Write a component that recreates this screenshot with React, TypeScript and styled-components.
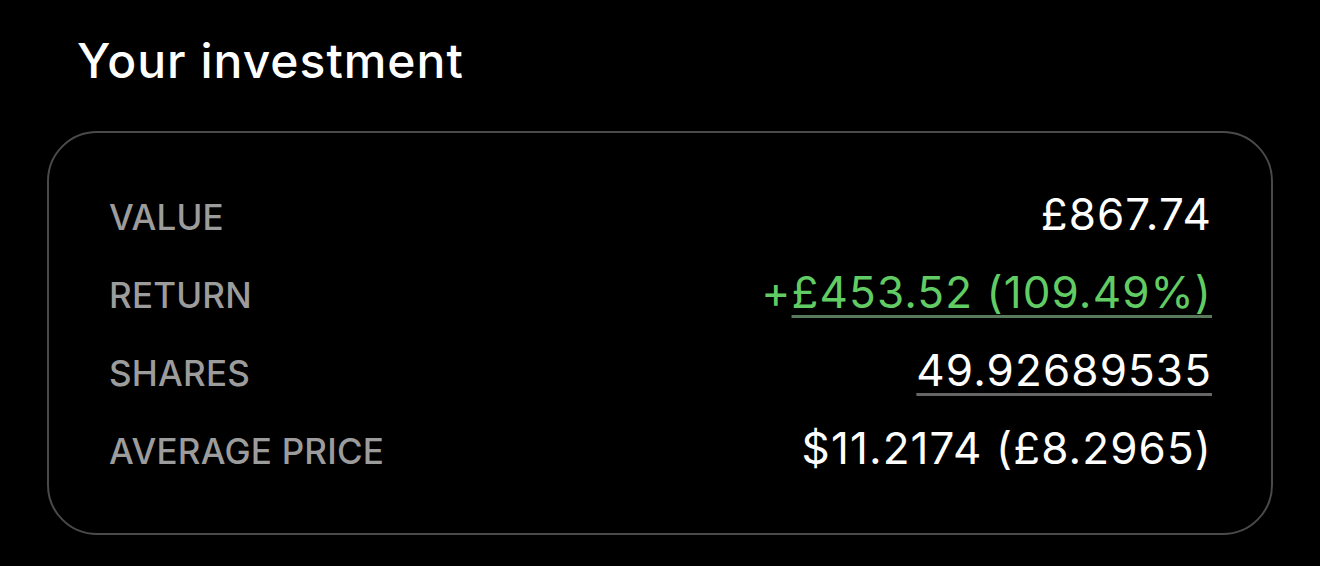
import styled, { createGlobalStyle } from "styled-components";

const GlobalStyle = createGlobalStyle`
  html, body {
    margin: 0;
    padding: 0;
    background: #000;
  }
  body {
    font-family: "Inter", "Liberation Sans", sans-serif;
    color: #fff;
  }
`;

const Page = styled.main`
  width: 1320px;
  height: 566px;
  box-sizing: border-box;
  padding: 22px 47px 0 47px;
  background: #000;
`;

const Title = styled.h2`
  margin: 0 0 0 30px;
  font-size: 48px;
  font-weight: 500;
  line-height: 78px;
  letter-spacing: 1px;
  color: #fff;
`;

const Card = styled.section`
  margin-top: 31px;
  box-sizing: border-box;
  height: 404px;
  border: 2px solid #4a4a4a;
  border-radius: 50px;
  padding: 42px 60px 0 60px;
`;

const Row = styled.div`
  display: flex;
  align-items: baseline;
  justify-content: space-between;
  height: 78px;
  line-height: 78px;
`;

const Label = styled.span`
  font-size: 35px;
  font-weight: 500;
  letter-spacing: 0.2px;
  color: #9c9c9c;
  text-transform: uppercase;
`;

const Value = styled.span<{ $tone?: "green" }>`
  font-size: 44px;
  letter-spacing: 1.1px;
  margin-right: -1px;
  color: ${(p) => (p.$tone === "green" ? "#62cc64" : "#fff")};
`;

const Linked = styled.span<{ $line: string }>`
  text-decoration: underline;
  text-decoration-color: ${(p) => p.$line};
  text-decoration-thickness: 3px;
  text-underline-offset: 7px;
`;

export default function App() {
  return (
    <>
      <GlobalStyle />
      <Page>
        <Title>Your investment</Title>
        <Card>
          <Row>
            <Label>Value</Label>
            <Value>£867.74</Value>
          </Row>
          <Row>
            <Label>Return</Label>
            <Value $tone="green">
              +<Linked $line="#58795a">£453.52 (109.49%)</Linked>
            </Value>
          </Row>
          <Row>
            <Label>Shares</Label>
            <Value>
              <Linked $line="#666">49.92689535</Linked>
            </Value>
          </Row>
          <Row>
            <Label>Average price</Label>
            <Value>$11.2174 (£8.2965)</Value>
          </Row>
        </Card>
      </Page>
    </>
  );
}
